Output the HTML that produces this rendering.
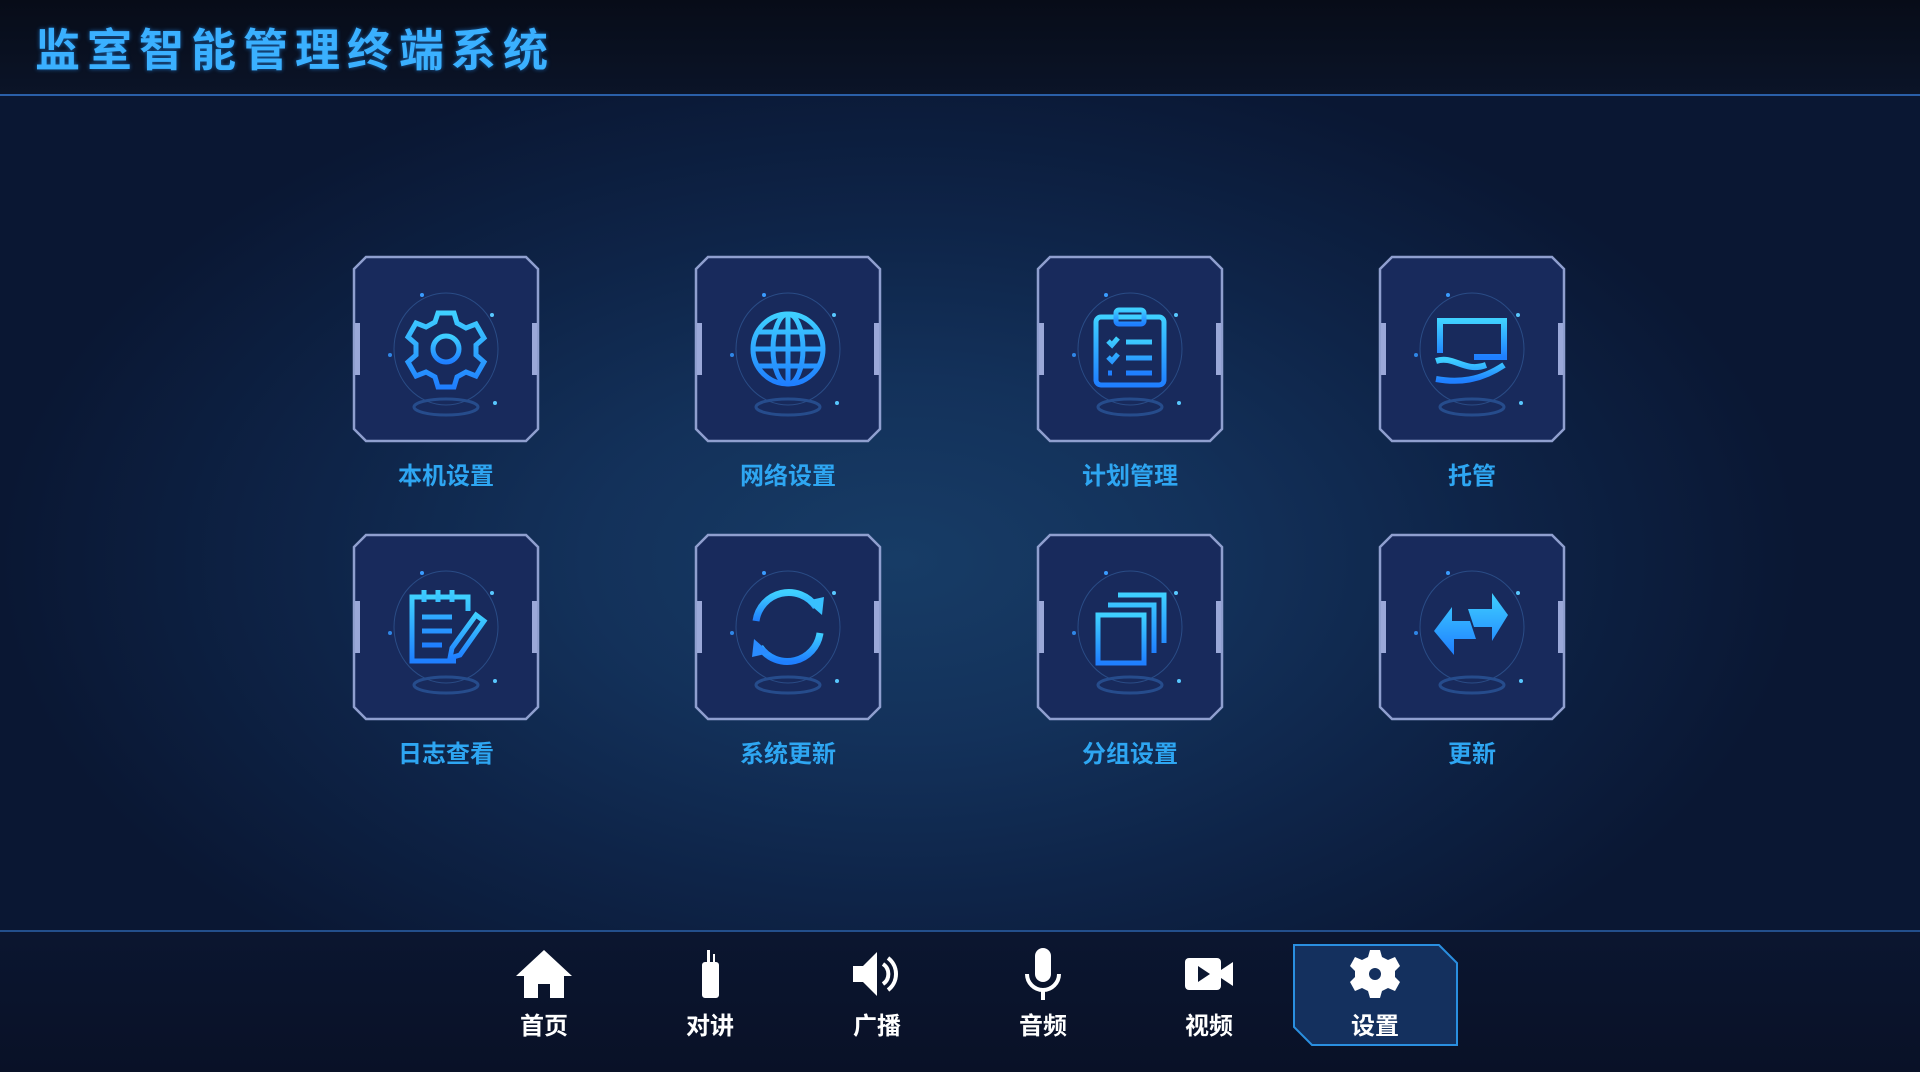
<!DOCTYPE html>
<html><head><meta charset="utf-8">
<style>
*{margin:0;padding:0;box-sizing:border-box}
body{width:1920px;height:1072px;overflow:hidden;position:relative;font-family:"Liberation Sans","Noto Sans CJK SC",sans-serif;
background:radial-gradient(ellipse 900px 520px at 900px 560px,#173c66 0%,#13315a 35%,#0e2448 65%,#0a1733 100%);}
.hdr{position:absolute;left:0;top:0;width:1920px;height:95px;background:linear-gradient(#070c18,#0b1428);}
.hline{position:absolute;left:0;top:94px;width:1920px;height:2px;background:#2a5fa8;}
.title{position:absolute;left:35px;top:14px;font-size:45px;font-weight:bold;letter-spacing:7px;color:#3ab0ff;text-shadow:0 0 4px rgba(40,150,255,.6);font-family:"Noto Sans CJK SC",sans-serif;}
.tile{position:absolute;width:188px;height:188px}
.lbl{position:absolute;width:240px;text-align:center;font-size:24px;font-weight:bold;color:#2ea6f2;font-family:"Noto Sans CJK SC",sans-serif}
.foot{position:absolute;left:0;top:930px;width:1920px;height:142px;background:linear-gradient(#0b1630,#091127);}
.fline{position:absolute;left:0;top:930px;width:1920px;height:2px;background:#234f8c}
.nav{position:absolute;width:120px;text-align:center;color:#fff;font-size:24px;font-family:"Noto Sans CJK SC",sans-serif;font-weight:bold}
.nav svg{display:block;margin:0 auto}
</style></head><body>
<div class="hdr"></div><div class="hline"></div>
<div class="title">监室智能管理终端系统</div>

<svg width="0" height="0" style="position:absolute">
<defs>
<symbol id="frame" viewBox="0 0 188 188">
<path d="M14 2H174L186 14V174L174 186H14L2 174V14Z" fill="#182a5c" stroke="#8f9fcf" stroke-width="2.5"/>
<rect x="3" y="68" width="5" height="52" fill="#9aa8d8"/>
<rect x="180" y="68" width="5" height="52" fill="#9aa8d8"/>
<ellipse cx="94" cy="94" rx="52" ry="56" fill="none" stroke="#2a4c86" stroke-width="1"/>
<ellipse cx="94" cy="152" rx="32" ry="8" fill="none" stroke="#264c8c" stroke-width="3"/>
<circle cx="70" cy="40" r="2" fill="#3a9cff"/><circle cx="140" cy="60" r="2" fill="#58c8ff"/><circle cx="38" cy="100" r="2" fill="#2f86e6"/><circle cx="143" cy="148" r="2" fill="#58c8ff"/>
</symbol>
<linearGradient id="ig" x1="0" y1="0" x2="0" y2="1"><stop offset="0" stop-color="#3fd0ff"/><stop offset="1" stop-color="#1f7fff"/></linearGradient>
</defs></svg>

<svg class="tile" style="left:352px;top:255px" viewBox="0 0 188 188"><use href="#frame"/>
<g fill="none" stroke="url(#ig)" stroke-width="5"><path d="M86 58h16l3 10 9 5 10-4 8 14-8 7v10l8 7-8 14-10-4-9 5-3 10H86l-3-10-9-5-10 4-8-14 8-7V89l-8-7 8-14 10 4 9-5z"/><circle cx="94" cy="94" r="13"/></g></svg>
<svg class="tile" style="left:694px;top:255px" viewBox="0 0 188 188"><use href="#frame"/>
<g fill="none" stroke="url(#ig)" stroke-width="5"><circle cx="94" cy="94" r="35"/><ellipse cx="94" cy="94" rx="15" ry="35"/><path d="M94 59v70M59 94h70M64 77h60M64 111h60"/></g></svg>
<svg class="tile" style="left:1036px;top:255px" viewBox="0 0 188 188"><use href="#frame"/>
<g fill="none" stroke="url(#ig)" stroke-width="5"><rect x="60" y="62" width="68" height="68" rx="5"/><rect x="80" y="55" width="28" height="14" rx="3"/><path d="M72 86l4 4 6-7M90 87h26M72 102l4 4 6-7M90 103h26M72 118h4M90 118h26"/></g></svg>
<svg class="tile" style="left:1378px;top:255px" viewBox="0 0 188 188"><use href="#frame"/>
<g fill="none" stroke="url(#ig)" stroke-width="6"><path d="M62 98V66h64v36H96"/><path d="M58 106c18-6 28 12 50 4M58 124c22 4 44 2 68-14" /></g></svg>

<div class="lbl" style="left:326px;top:456px">本机设置</div>
<div class="lbl" style="left:668px;top:456px">网络设置</div>
<div class="lbl" style="left:1010px;top:456px">计划管理</div>
<div class="lbl" style="left:1352px;top:456px">托管</div>

<svg class="tile" style="left:352px;top:533px" viewBox="0 0 188 188"><use href="#frame"/>
<g fill="none" stroke="url(#ig)" stroke-width="5"><path d="M116 78V64H60v64h44"/><path d="M72 57v12M86 57v12M100 57v12M70 84h30M70 98h30M70 112h20"/><path d="M124 82l8 6-24 34-10 3 2-10z"/></g></svg>
<svg class="tile" style="left:694px;top:533px" viewBox="0 0 188 188"><use href="#frame"/>
<g fill="none" stroke="url(#ig)" stroke-width="7"><path d="M62 88a33 33 0 0 1 60-14"/><path d="M126 100a33 33 0 0 1-60 14"/></g>
<path d="M112 68l18-4-2 18z" fill="#38c0ff"/><path d="M76 120l-18 4 2-18z" fill="#2a8cff"/></svg>
<svg class="tile" style="left:1036px;top:533px" viewBox="0 0 188 188"><use href="#frame"/>
<g fill="none" stroke="url(#ig)" stroke-width="5"><rect x="62" y="82" width="46" height="48"/><path d="M72 72h46v48M82 62h46v48"/></g></svg>
<svg class="tile" style="left:1378px;top:533px" viewBox="0 0 188 188"><use href="#frame"/>
<path d="M90 76h24V60l16 22-16 26V94H96zM98 106H76v16L56 98l18-24v14h18z" fill="url(#ig)"/></svg>

<div class="lbl" style="left:326px;top:734px">日志查看</div>
<div class="lbl" style="left:668px;top:734px">系统更新</div>
<div class="lbl" style="left:1010px;top:734px">分组设置</div>
<div class="lbl" style="left:1352px;top:734px">更新</div>

<div class="foot"></div><div class="fline"></div>
<svg style="position:absolute;left:1293px;top:944px" width="165" height="102"><path d="M1 1H146L164 19V101H19L1 83Z" fill="#14305e" stroke="#2a8fe0" stroke-width="2"/></svg>

<div class="nav" style="left:484px;top:948px"><svg width="60" height="52" viewBox="0 0 60 52"><path d="M30 2L2 28h8v22h14V36h12v14h14V28h8z" fill="#fff"/></svg><div style="margin-top:6px">首页</div></div>
<div class="nav" style="left:650px;top:948px"><svg width="60" height="52" viewBox="0 0 60 52"><path d="M27 2h3v12h3V6h2v8h1a3 3 0 0 1 3 3v30a3 3 0 0 1-3 3H25a3 3 0 0 1-3-3V17a3 3 0 0 1 3-3h2z" fill="#fff"/></svg><div style="margin-top:6px">对讲</div></div>
<div class="nav" style="left:817px;top:948px"><svg width="60" height="52" viewBox="0 0 60 52"><path d="M6 18h10L30 4v44L16 34H6z" fill="#fff"/><path d="M36 16a12 12 0 0 1 0 20M41 10a20 20 0 0 1 0 32" stroke="#fff" stroke-width="4" fill="none"/></svg><div style="margin-top:6px">广播</div></div>
<div class="nav" style="left:983px;top:948px"><svg width="60" height="52" viewBox="0 0 60 52"><rect x="22" y="0" width="16" height="34" rx="8" fill="#fff"/><path d="M14 26a16 16 0 0 0 32 0M30 42v10" stroke="#fff" stroke-width="4" fill="none"/></svg><div style="margin-top:6px">音频</div></div>
<div class="nav" style="left:1149px;top:948px"><svg width="60" height="52" viewBox="0 0 60 52"><rect x="6" y="10" width="36" height="32" rx="4" fill="#fff"/><path d="M42 22l12-8v24l-12-8z" fill="#fff"/><path d="M19 18l12 8-12 8z" fill="#0b1630"/></svg><div style="margin-top:6px">视频</div></div>
<div class="nav" style="left:1315px;top:948px"><svg width="60" height="52" viewBox="0 0 60 52"><path d="M25 2h10l2 7 6 3 7-3 5 9-5 5v6l5 5-5 9-7-3-6 3-2 7H25l-2-7-6-3-7 3-5-9 5-5v-6l-5-5 5-9 7 3 6-3z" fill="#fff"/><circle cx="30" cy="26" r="6" fill="#14305e"/></svg><div style="margin-top:6px">设置</div></div>
</body></html>
